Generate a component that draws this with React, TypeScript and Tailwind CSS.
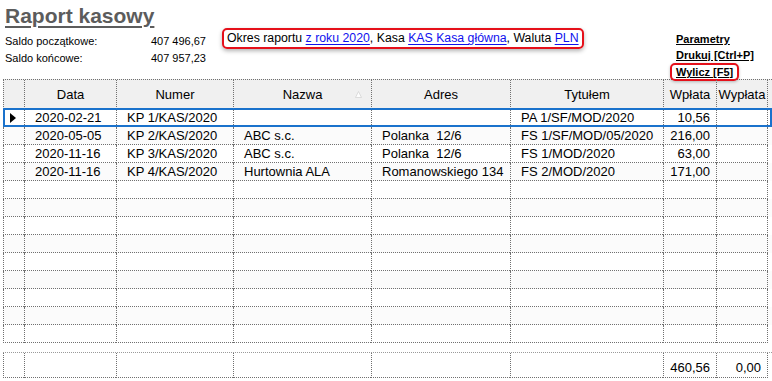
const rows = [
  { data: "2020-02-21", numer: "KP 1/KAS/2020", nazwa: "", adres: "", tytulem: "PA 1/SF/MOD/2020", wplata: "10,56" },
  { data: "2020-05-05", numer: "KP 2/KAS/2020", nazwa: "ABC s.c.", adres: "Polanka  12/6", tytulem: "FS 1/SF/MOD/05/2020", wplata: "216,00" },
  { data: "2020-11-16", numer: "KP 3/KAS/2020", nazwa: "ABC s.c.", adres: "Polanka  12/6", tytulem: "FS 1/MOD/2020", wplata: "63,00" },
  { data: "2020-11-16", numer: "KP 4/KAS/2020", nazwa: "Hurtownia ALA", adres: "Romanowskiego 134", tytulem: "FS 2/MOD/2020", wplata: "171,00" },
];

const emptyRows = 9;

const cell = "border-l border-b border-dotted border-[#707070] whitespace-pre overflow-hidden";
const gridCols = "grid grid-cols-[21px_92px_117px_138px_139px_153px_53px_52px]";

const Link = ({ children }: { children: React.ReactNode }) => (
  <span className="text-[#1010ee] underline underline-offset-2">{children}</span>
);

const App = () => {
  const allRows = [...rows, ...Array.from({ length: emptyRows }, () => null)];

  return (
    <div className="w-[772px] h-[381px] bg-white text-black font-['Liberation_Sans',Arial,sans-serif] overflow-hidden">
      {/* Top */}
      <div className="flex h-[79px]">
        <div className="w-[222px] pl-[5px]">
          <h1 className="pt-[4px] text-[21px] leading-[23px] font-bold text-[#5c5c5c] underline decoration-2 underline-offset-[3px]">
            Raport kasowy
          </h1>
          <div className="mt-[6px] text-[11px] leading-[17px] w-[201px]">
            <div className="flex justify-between">
              <span>Saldo początkowe:</span>
              <span>407 496,67</span>
            </div>
            <div className="flex justify-between">
              <span>Saldo końcowe:</span>
              <span>407 957,23</span>
            </div>
          </div>
        </div>

        <div className="mt-[28px] h-[21px] w-[362px] whitespace-nowrap border-2 border-[#e5101a] rounded-[5px] shadow-[0_2px_4px_rgba(0,0,0,0.3)] px-[3px] text-[12.3px] leading-[17px]">
          Okres raportu <Link>z roku 2020</Link>, Kasa <Link>KAS Kasa główna</Link>, Waluta <Link>PLN</Link>
        </div>

        <div className="ml-[92px] mt-[31px] flex flex-col items-start text-[11px] leading-[16px] font-bold whitespace-nowrap">
          <span className="underline">Parametry</span>
          <span className="underline">Drukuj [Ctrl+P]</span>
          <span className="-ml-[6px] px-[4px] border-2 border-[#e5101a] rounded-[5px] leading-[14px] shadow-[0_1px_3px_rgba(0,0,0,0.25)]">
            <span className="underline">Wylicz [F5]</span>
          </span>
        </div>
      </div>

      {/* Table */}
      <div className="ml-[3px] text-[13px]">
        <div className={`${gridCols} h-[30px] bg-[#f0f0f0] border-t border-dotted border-[#707070] leading-[29px] text-center`}>
          <div className={cell}></div>
          <div className={cell}>Data</div>
          <div className={cell}>Numer</div>
          <div className={`${cell} relative`}>
            Nazwa
            <svg className="absolute right-[9px] top-[11px]" width="7" height="7" viewBox="0 0 7 7">
              <polygon points="3.5,0.5 6.5,6.5 0.5,6.5" fill="#fdfdfd" stroke="#d4d4d4" strokeWidth="0.8" />
            </svg>
          </div>
          <div className={cell}>Adres</div>
          <div className={cell}>Tytułem</div>
          <div className={cell}>Wpłata</div>
          <div className={`${cell} border-r`}>Wypłata</div>
        </div>

        {allRows.map((r, i) => (
          <div
            key={i}
            className={`${gridCols} relative h-[18px] leading-[17px] ${i % 2 === 1 ? "bg-[#fbfbfb]" : "bg-white"}`}
          >
            <div className={`${cell} flex items-center pl-[6px]`}>
              {i === 0 && (
                <svg width="6" height="10" viewBox="0 0 6 10">
                  <polygon points="0,0 6,5 0,10" fill="#000" />
                </svg>
              )}
            </div>
            <div className={`${cell} pl-[10px]`}>{r?.data}</div>
            <div className={`${cell} pl-[10px]`}>{r?.numer}</div>
            <div className={`${cell} pl-[10px]`}>{r?.nazwa}</div>
            <div className={`${cell} pl-[10px]`}>{r?.adres}</div>
            <div className={`${cell} pl-[10px]`}>{r?.tytulem}</div>
            <div className={`${cell} text-right pr-[6px]`}>{r?.wplata}</div>
            <div className={`${cell} border-r`}></div>
            {i === 0 && (
              <div className="absolute -top-px left-0 right-0 bottom-0 border-2 border-[#1a72cc] pointer-events-none" />
            )}
          </div>
        ))}

        {/* Footer */}
        <div className={`${gridCols} mt-[9px] h-[26px] border-t border-dotted border-[#9a9a9a] leading-[30px]`}>
          <div className={`${cell} border-[#9a9a9a]`}></div>
          <div className={`${cell} border-[#9a9a9a]`}></div>
          <div className={`${cell} border-[#9a9a9a]`}></div>
          <div className={`${cell} border-[#9a9a9a]`}></div>
          <div className={`${cell} border-[#9a9a9a]`}></div>
          <div className={`${cell} border-[#9a9a9a]`}></div>
          <div className={`${cell} border-[#9a9a9a] text-right pr-[6px]`}>460,56</div>
          <div className={`${cell} border-[#9a9a9a] border-r text-right pr-[6px]`}>0,00</div>
        </div>
      </div>
    </div>
  );
};

export default App;
